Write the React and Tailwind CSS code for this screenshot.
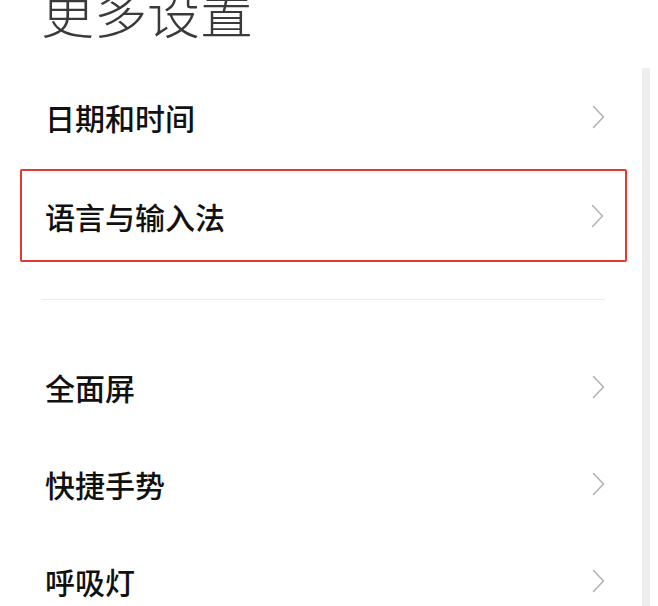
import React from "react";

const font = { fontFamily: '"Noto Sans CJK SC", "Noto Sans", sans-serif' };

const Chevron = () => (
  <svg width="13" height="24" viewBox="0 0 13 24" fill="none" className="shrink-0">
    <path d="M1.5 1.5 L11.5 12 L1.5 22.5" stroke="#b3b3b3" strokeWidth="1.6" strokeLinecap="round" strokeLinejoin="round" />
  </svg>
);

const Row = ({ label, boxed }) =>
  boxed ? (
    <div className="ml-[20px] mr-[31px] mt-[4px] h-[93px] flex items-center justify-between border-2 border-[#e53935] rounded-[2px] pl-[23px] pr-[21px]">
      <span className="text-[30px] font-medium text-[#111] leading-none">{label}</span>
      <Chevron />
    </div>
  ) : (
    <div className="h-[97px] flex items-center justify-between pl-[45px] pr-[53px]">
      <span className="text-[30px] font-medium text-[#111] leading-none">{label}</span>
      <Chevron />
    </div>
  );

const App = () => {
  return (
    <div className="relative w-[658px] h-[606px] overflow-hidden bg-white" style={font}>
      <div className="absolute right-[8px] top-[68px] bottom-0 w-[8px] bg-[#eeeeee]" />
      <div className="h-[83px] pl-[41px]">
        <h1 className="text-[53px] font-light text-[#3a3a3a] leading-none mt-[-15px]">更多设置</h1>
      </div>
      <Row label="日期和时间" />
      <Row label="语言与输入法" boxed />
      <div className="mt-[37px] mb-[38px] ml-[42px] mr-[53px] h-[1px] bg-[#ebebeb]" />
      <Row label="全面屏" />
      <Row label="快捷手势" />
      <Row label="呼吸灯" />
    </div>
  );
};

export default App;
